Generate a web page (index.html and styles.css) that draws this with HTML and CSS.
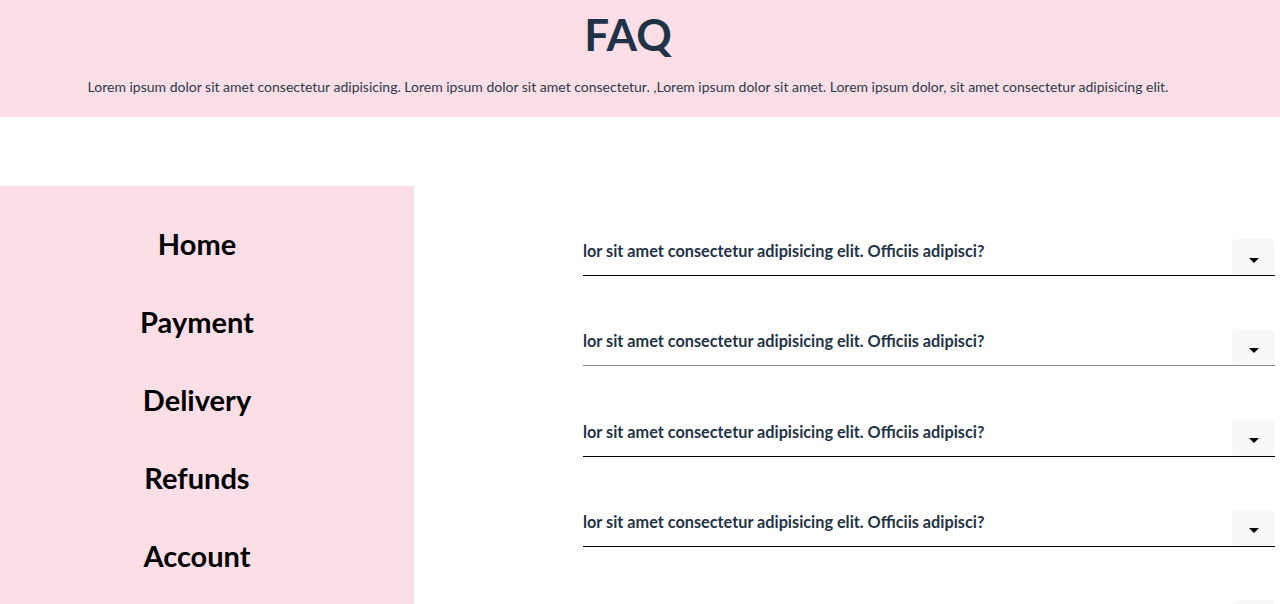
FILE: index.html
```html
<!DOCTYPE html>
<html lang="en">
<head>
<meta charset="utf-8">
<title>FAQ</title>
<link rel="stylesheet" href="styles.css">
</head>
<body>
<header class="hero">
  <h1 class="hero-title">FAQ</h1>
  <p class="hero-text">Lorem ipsum dolor sit amet consectetur adipisicing. Lorem ipsum dolor sit amet consectetur. ,Lorem ipsum dolor sit amet. Lorem ipsum dolor, sit amet consectetur adipisicing elit.</p>
</header>
<main class="content">
  <nav class="side">
    <a class="side-link" href="#">Home</a>
    <a class="side-link" href="#">Payment</a>
    <a class="side-link" href="#">Delivery</a>
    <a class="side-link" href="#">Refunds</a>
    <a class="side-link" href="#">Account</a>
  </nav>
  <section class="faq">
    <div class="item">
      <h3 class="question">lor sit amet consectetur adipisicing elit. Officiis adipisci?</h3>
      <button class="toggle" aria-label="expand"><span class="caret"></span></button>
    </div>
    <div class="item item-light">
      <h3 class="question">lor sit amet consectetur adipisicing elit. Officiis adipisci?</h3>
      <button class="toggle" aria-label="expand"><span class="caret"></span></button>
    </div>
    <div class="item">
      <h3 class="question">lor sit amet consectetur adipisicing elit. Officiis adipisci?</h3>
      <button class="toggle" aria-label="expand"><span class="caret"></span></button>
    </div>
    <div class="item">
      <h3 class="question">lor sit amet consectetur adipisicing elit. Officiis adipisci?</h3>
      <button class="toggle" aria-label="expand"><span class="caret"></span></button>
    </div>
    <div class="item">
      <h3 class="question">lor sit amet consectetur adipisicing elit. Officiis adipisci?</h3>
      <button class="toggle" aria-label="expand"><span class="caret"></span></button>
    </div>
  </section>
</main>
</body>
</html>
```
FILE: styles.css
```css
* { box-sizing: border-box; }
html, body { margin: 0; padding: 0; }
body {
  font-family: Lato, "Noto Sans", sans-serif;
  background: #ffffff;
  color: #1f3347;
  overflow: hidden;
}
.hero {
  background: #fcdee7;
  height: 117px;
  padding: 8px 24px 0 0;
  text-align: center;
}
.hero-title {
  margin: 0;
  font-size: 44px;
  line-height: 52px;
  font-weight: 700;
  color: #1f3347;
}
.hero-text {
  margin: 18px 0 0;
  font-size: 14px;
  line-height: 18px;
  color: #2a3a4a;
}
.content {
  display: flex;
  margin-top: 69px;
}
.side {
  width: 414px;
  flex: none;
  background: #fcdee7;
  display: flex;
  flex-direction: column;
  align-items: center;
  padding: 39px 20px 30px 0;
  gap: 40px;
}
.side-link {
  font-size: 29px;
  line-height: 38px;
  font-weight: 700;
  color: #000;
  text-decoration: none;
}
.faq {
  flex: 1;
  padding: 53px 5px 0 169px;
  display: flex;
  flex-direction: column;
  gap: 53.33px;
}
.item {
  display: flex;
  align-items: flex-end;
  justify-content: space-between;
  border-bottom: 1px solid #000;
}
.item-light { border-bottom-color: #8a8a8a; }
.question {
  margin: 0 0 14px;
  font-size: 16.25px;
  line-height: 20px;
  font-weight: 700;
  color: #1f3347;
}
.toggle {
  width: 43px;
  height: 36px;
  border: none;
  border-radius: 5px;
  background: #f8f8f8;
  display: flex;
  align-items: center;
  justify-content: center;
  padding: 6px 0 0;
  cursor: pointer;
}
.caret {
  width: 0;
  height: 0;
  border-left: 5px solid transparent;
  border-right: 5px solid transparent;
  border-top: 5px solid #000;
}
```
